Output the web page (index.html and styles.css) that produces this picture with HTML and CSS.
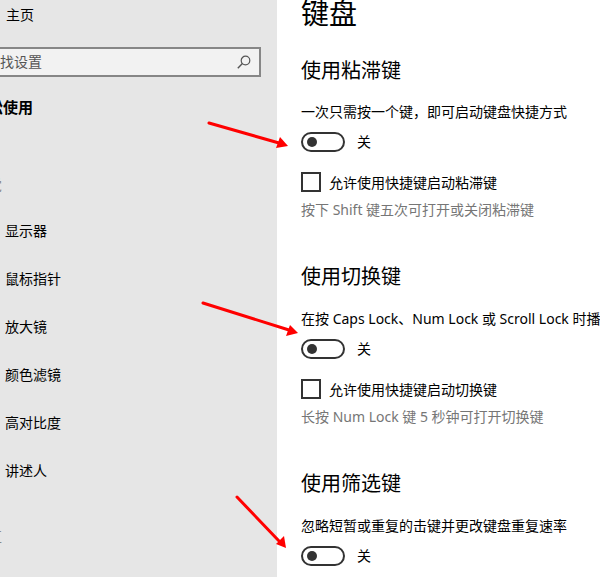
FILE: index.html
```html
<!DOCTYPE html>
<html lang="zh-CN">

<head>
  <meta charset="UTF-8" />
  <title>键盘</title>
  <meta name="viewport" content="width=device-width, initial-scale=1.0" />
  <link rel="stylesheet" href="styles.css">
</head>

<body>
  <div class="window">
    <!-- 侧边栏 -->
    <aside class="sidebar">
      <div class="home">主页</div>
      <div class="search">
        <span class="placeholder">查找设置</span>
        <svg class="search-icon" width="16" height="16" viewBox="0 0 16 16">
          <circle cx="9.5" cy="6.5" r="4.3" fill="none" stroke="#555" stroke-width="1.2" />
          <line x1="6.4" y1="9.6" x2="1.8" y2="14.2" stroke="#555" stroke-width="1.4" />
        </svg>
      </div>
      <div class="category">轻松使用</div>
      <div class="group">视觉</div>
      <ul class="nav">
        <li>显示器</li>
        <li>鼠标指针</li>
        <li>放大镜</li>
        <li>颜色滤镜</li>
        <li>高对比度</li>
        <li>讲述人</li>
      </ul>
      <div class="group">交互</div>
    </aside>

    <!-- 内容 -->
    <main class="content">
      <h1 class="title">键盘</h1>

      <section class="block">
        <h2>使用粘滞键</h2>
        <p class="desc">一次只需按一个键，即可启动键盘快捷方式</p>
        <div class="toggle-row">
          <span class="toggle"><span class="knob"></span></span>
          <span class="state">关</span>
        </div>
        <label class="check-row">
          <span class="box"></span>
          <span>允许使用快捷键启动粘滞键</span>
        </label>
        <p class="note">按下 Shift 键五次可打开或关闭粘滞键</p>
      </section>

      <section class="block">
        <h2>使用切换键</h2>
        <p class="desc">在按 Caps Lock、Num Lock 或 Scroll Lock 时播放声音</p>
        <div class="toggle-row">
          <span class="toggle"><span class="knob"></span></span>
          <span class="state">关</span>
        </div>
        <label class="check-row">
          <span class="box"></span>
          <span>允许使用快捷键启动切换键</span>
        </label>
        <p class="note">长按 Num Lock 键 5 秒钟可打开切换键</p>
      </section>

      <section class="block">
        <h2>使用筛选键</h2>
        <p class="desc">忽略短暂或重复的击键并更改键盘重复速率</p>
        <div class="toggle-row">
          <span class="toggle"><span class="knob"></span></span>
          <span class="state">关</span>
        </div>
      </section>
    </main>

    <!-- 标注箭头 -->
    <svg class="marks" width="600" height="577" viewBox="0 0 600 577">
      <g stroke="#f00" stroke-width="3" stroke-linecap="round">
        <line x1="209" y1="123" x2="279" y2="143" />
        <line x1="203" y1="303" x2="289" y2="330" />
        <line x1="237" y1="497" x2="279" y2="541" />
      </g>
      <g fill="#f00">
        <polygon points="288,146 276,148 280,137" />
        <polygon points="298,333 286,336 290,325" />
        <polygon points="286,548 276,544 284,536" />
      </g>
    </svg>
  </div>
</body>

</html>
```

FILE: styles.css
```css
:root {
  /* 侧边栏 背景色 */
  --sidebar-bg: #e6e6e6;
  /* 文字色 */
  --text: #000;
  /* 说明文字色 */
  --text-muted: #767676;
  /* 控件边框 */
  --control: #333;
}

html,
body {
  margin: 0;
  height: 100%;
  overflow: hidden;
}

body {
  font-family: "Noto Sans", "Noto Sans CJK SC", sans-serif;
  font-size: 14px;
  color: var(--text);
  background: #fff;
}

.window {
  position: relative;
  display: flex;
  width: 600px;
  height: 577px;
  overflow: hidden;
}

/* 侧边栏 */
.sidebar {
  width: 277px;
  flex-shrink: 0;
  background: var(--sidebar-bg);
  overflow: hidden;
}

.home {
  margin: 5px 0 0 6px;
  line-height: 20px;
}

.search {
  display: flex;
  align-items: center;
  justify-content: space-between;
  box-sizing: border-box;
  height: 30px;
  width: 290px;
  margin: 22px 0 0 -29px;
  padding: 0 7px 0 13px;
  background: #f2f2f2;
  border: 2px solid #868686;
}

.search .placeholder {
  color: #555;
  line-height: 20px;
}

.search-icon {
  display: block;
}

.category {
  margin: 20px 0 0 -27px;
  font-size: 15px;
  font-weight: bold;
  line-height: 20px;
}

.group {
  margin: 58px 0 0 -26px;
  color: #888;
  line-height: 20px;
}

.nav {
  list-style: none;
  margin: 12px 0 0;
  padding: 0;
}

.nav li {
  padding-left: 5px;
  line-height: 48px;
}

.nav + .group {
  margin-top: 32px;
}

/* 内容 */
.content {
  flex: 1;
  padding-left: 24px;
  white-space: nowrap;
  overflow: hidden;
}

.title {
  margin: -2px 0 0;
  font-size: 28px;
  font-weight: normal;
  line-height: 30px;
}

.block {
  margin-top: 29px;
}

.block + .block {
  margin-top: 43px;
}

.block h2 {
  margin: 0;
  font-size: 20px;
  font-weight: normal;
  line-height: 28px;
}

.desc {
  margin: 17px 0 0;
  line-height: 20px;
}

.block + .block .desc {
  margin-top: 18px;
}

.toggle-row {
  display: flex;
  align-items: center;
  gap: 12px;
  margin-top: 10px;
  height: 20px;
}

.toggle {
  display: flex;
  align-items: center;
  box-sizing: border-box;
  width: 44px;
  height: 20px;
  padding-left: 4px;
  border: 2px solid var(--control);
  border-radius: 10px;
}

.knob {
  width: 10px;
  height: 10px;
  border-radius: 50%;
  background: var(--control);
}

.state {
  line-height: 20px;
}

.check-row {
  display: flex;
  align-items: center;
  gap: 8px;
  margin-top: 20px;
  height: 20px;
}

.box {
  box-sizing: border-box;
  width: 20px;
  height: 20px;
  border: 2px solid var(--control);
}

.note {
  margin: 8px 0 0;
  color: var(--text-muted);
  line-height: 20px;
}

/* 标注 */
.marks {
  position: absolute;
  left: 0;
  top: 0;
  pointer-events: none;
}
```
